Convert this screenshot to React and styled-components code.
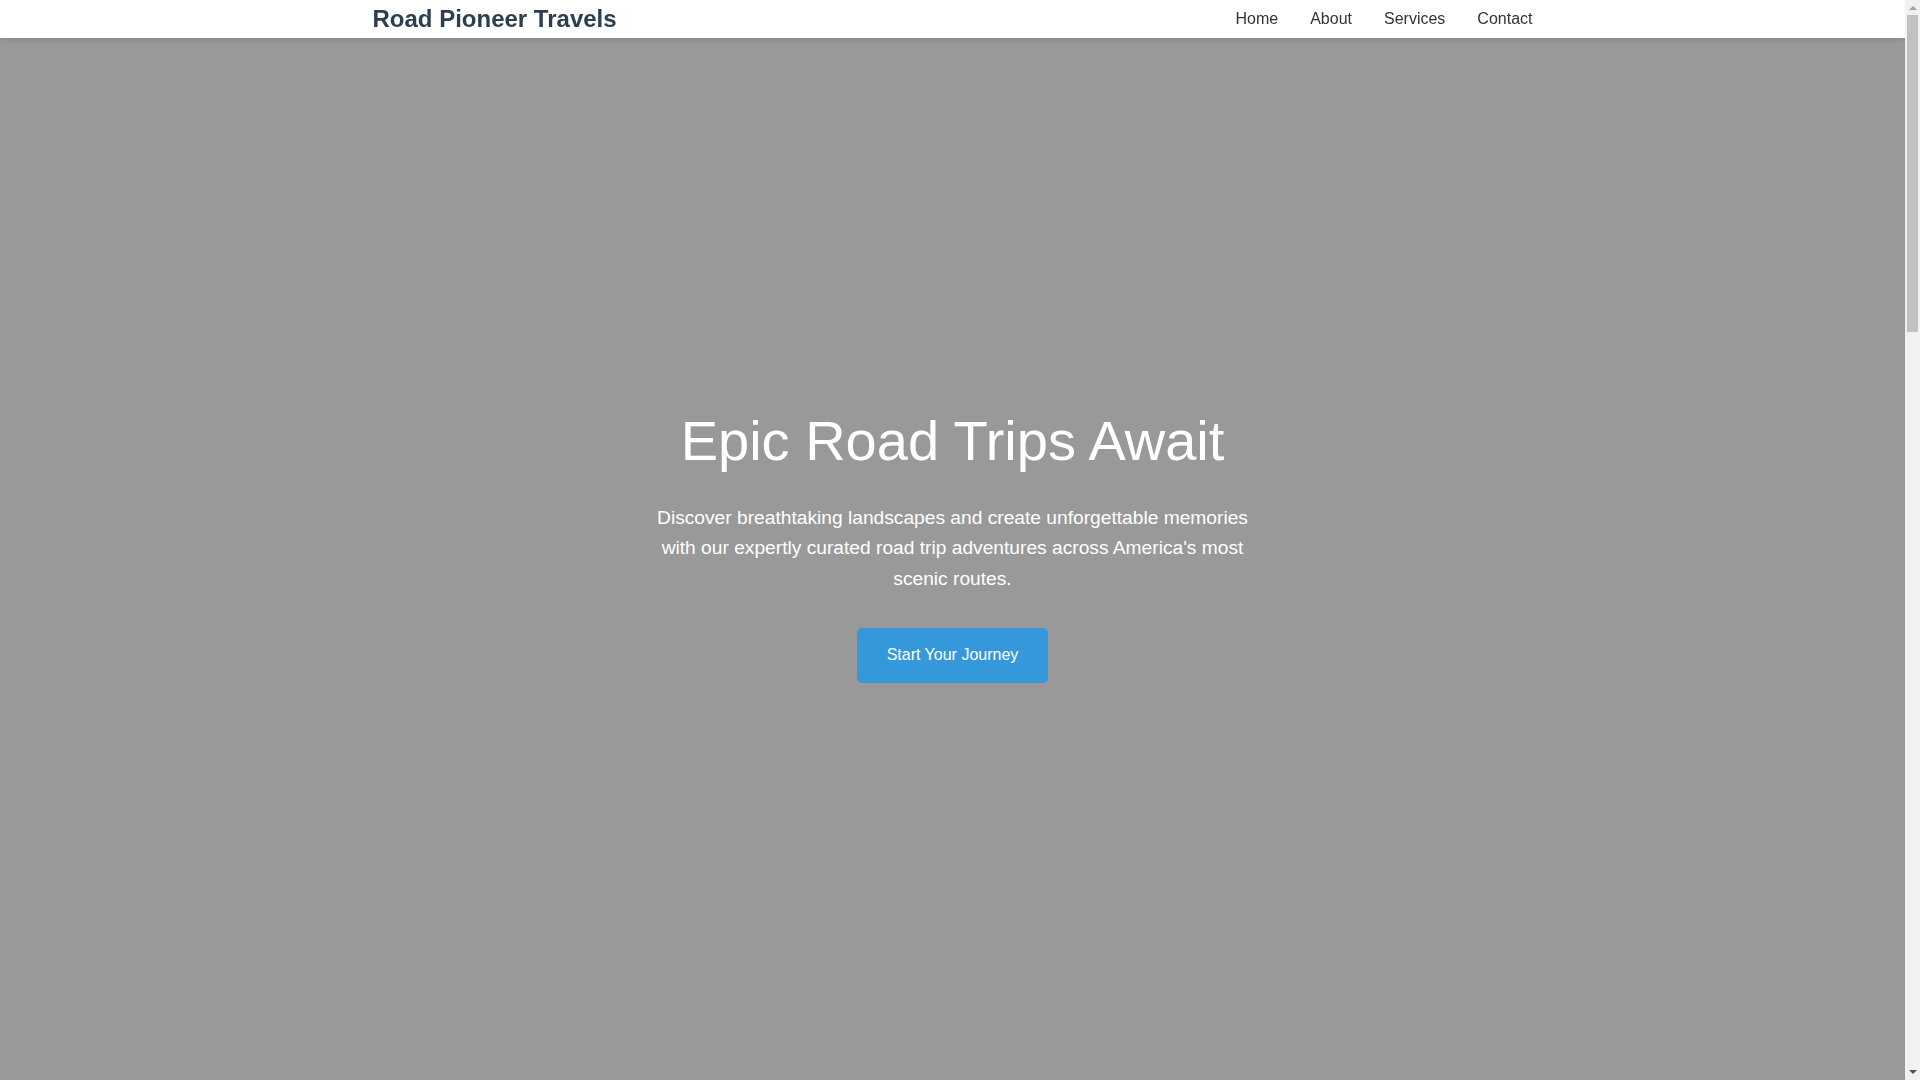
import React from "react";
import styled, { createGlobalStyle } from "styled-components";

const GlobalStyle = createGlobalStyle`
  * { box-sizing: border-box; }
  html, body { margin: 0; padding: 0; height: 100%; overflow: hidden; }
  body {
    font-family: "Liberation Sans", Arial, sans-serif;
    color: #333;
    background: #fff;
    line-height: 1.6;
  }
`;

const Shell = styled.div`
  display: flex;
  height: 100vh;
`;

const Page = styled.div`
  flex: 1;
  min-width: 0;
  height: 100%;
  overflow-y: auto;
  scrollbar-width: none;
  &::-webkit-scrollbar { display: none; }
`;

const Rail = styled.div`
  width: 15px;
  flex: none;
  display: flex;
  flex-direction: column;
  background: #f1f1f1;
`;

const RailButton = styled.div`
  height: 15px;
  flex: none;
  display: flex;
  justify-content: center;
  align-items: ${(p) => (p.$down ? "flex-start" : "flex-start")};
  padding-top: ${(p) => (p.$down ? "5px" : "6px")};
`;

const Arrow = styled.span`
  width: 0;
  height: 0;
  border-left: 4px solid transparent;
  border-right: 4px solid transparent;
  ${(p) =>
    p.$down
      ? "border-top: 4px solid #505050;"
      : "border-bottom: 4px solid #a3a3a3;"}
`;

const Track = styled.div`
  flex: 1;
  padding: 0 2px;
`;

const Thumb = styled.div`
  height: 317px;
  background: #c1c1c1;
`;

const Header = styled.header`
  position: sticky;
  top: 0;
  z-index: 10;
  height: 38px;
  background: #fff;
  box-shadow: 0 2px 5px rgba(0, 0, 0, 0.1);
`;

const Container = styled.div`
  max-width: 1200px;
  margin: 0 auto;
  padding: 0 20px;
`;

const NavBar = styled(Container)`
  height: 100%;
  display: flex;
  align-items: center;
  justify-content: space-between;
`;

const Logo = styled.a`
  font-size: 24px;
  font-weight: 700;
  color: #2c3e50;
  text-decoration: none;
  line-height: 1.15;
`;

const NavList = styled.ul`
  list-style: none;
  margin: 0;
  padding: 0;
  display: flex;
  gap: 32px;
`;

const NavLink = styled.a`
  font-size: 16px;
  color: #333;
  text-decoration: none;
  line-height: 1.15;
`;

const Hero = styled.section`
  height: calc(100vh - 38px);
  background: #999;
  display: flex;
  align-items: center;
  justify-content: center;
  text-align: center;
  color: #fff;
  padding-bottom: 26px;
`;

const HeroContent = styled.div`
  display: flex;
  flex-direction: column;
  align-items: center;
`;

const Title = styled.h1`
  font-size: 56px;
  font-weight: 400;
  line-height: 1.15;
  margin: 0 0 29px;
`;

const Lead = styled.p`
  font-size: 19.2px;
  line-height: 1.6;
  max-width: 600px;
  margin: 0 0 33px;
`;

const CTA = styled.a`
  display: inline-block;
  background: #3498db;
  color: #fff;
  text-decoration: none;
  font-size: 16px;
  line-height: 18.4px;
  padding: 18.3px 30px;
  border-radius: 5px;
`;

const Section = styled.section`
  padding: 80px 0;
  background: ${(p) => (p.$alt ? "#f8f9fa" : "#fff")};
  min-height: ${(p) => p.$min || "auto"};
`;

const SectionTitle = styled.h2`
  text-align: center;
  font-size: 40px;
  font-weight: 400;
  color: #2c3e50;
  margin: 0 0 40px;
`;

const Grid = styled.div`
  display: grid;
  grid-template-columns: repeat(3, 1fr);
  gap: 32px;
`;

const Card = styled.div`
  background: #fff;
  border-radius: 8px;
  padding: 32px;
  box-shadow: 0 4px 12px rgba(0, 0, 0, 0.08);
  min-height: 260px;
`;

const CardTitle = styled.h3`
  margin: 0 0 12px;
  color: #2c3e50;
  font-size: 22px;
`;

const Text = styled.p`
  margin: 0;
  font-size: 16px;
`;

const Footer = styled.footer`
  background: #2c3e50;
  color: #fff;
  text-align: center;
  padding: 40px 0;
`;

const services = [
  ["Coastal Highways", "Cruise the Pacific Coast Highway with curated stops at hidden beaches and cliffside viewpoints."],
  ["Mountain Passes", "Wind through the Rockies and Appalachians on routes planned for the best seasonal views."],
  ["Desert Escapes", "Explore the canyons and mesas of the Southwest with guided itineraries and lodging."],
];

export default function App() {
  return (
    <>
      <GlobalStyle />
      <Shell>
        <Page>
          <Header>
            <NavBar>
              <Logo href="#">Road Pioneer Travels</Logo>
              <nav>
                <NavList>
                  <li><NavLink href="#">Home</NavLink></li>
                  <li><NavLink href="#">About</NavLink></li>
                  <li><NavLink href="#">Services</NavLink></li>
                  <li><NavLink href="#">Contact</NavLink></li>
                </NavList>
              </nav>
            </NavBar>
          </Header>
          <Hero>
            <HeroContent>
              <Title>Epic Road Trips Await</Title>
              <Lead>
                Discover breathtaking landscapes and create unforgettable memories with our expertly curated road trip adventures across America's most scenic routes.
              </Lead>
              <CTA href="#">Start Your Journey</CTA>
            </HeroContent>
          </Hero>
          <Section $min="600px">
            <Container>
              <SectionTitle>About Us</SectionTitle>
              <Text>
                Road Pioneer Travels has been planning unforgettable journeys across the open roads of America for over a decade.
              </Text>
            </Container>
          </Section>
          <Section $alt $min="900px">
            <Container>
              <SectionTitle>Our Services</SectionTitle>
              <Grid>
                {services.map(([t, d]) => (
                  <Card key={t}>
                    <CardTitle>{t}</CardTitle>
                    <Text>{d}</Text>
                  </Card>
                ))}
              </Grid>
            </Container>
          </Section>
          <Section $min="850px">
            <Container>
              <SectionTitle>Contact</SectionTitle>
              <Text>Email us at hello@roadpioneertravels.com to start planning your next adventure.</Text>
            </Container>
          </Section>
          <Footer>
            <Text>© 2024 Road Pioneer Travels. All rights reserved.</Text>
          </Footer>
        </Page>
        <Rail aria-hidden="true">
          <RailButton>
            <Arrow />
          </RailButton>
          <Track>
            <Thumb />
          </Track>
          <RailButton $down>
            <Arrow $down />
          </RailButton>
        </Rail>
      </Shell>
    </>
  );
}
